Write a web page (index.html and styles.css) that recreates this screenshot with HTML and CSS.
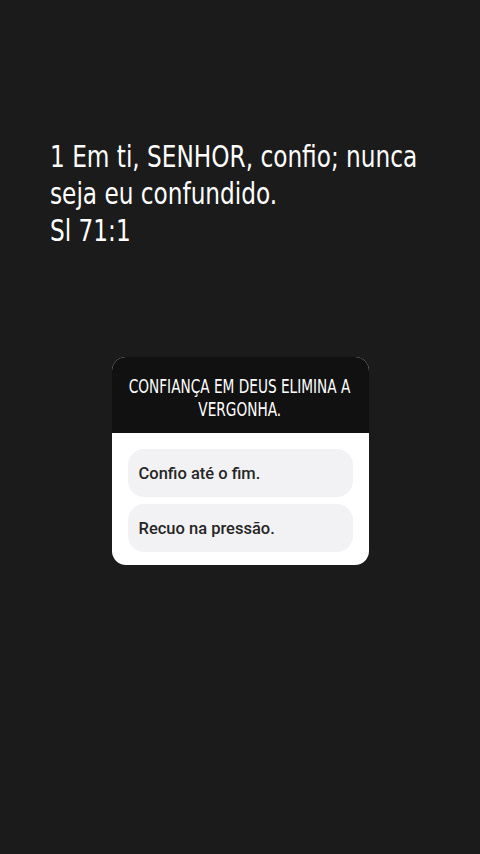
FILE: index.html
```html
<!DOCTYPE html>
<html lang="pt">
<head>
<meta charset="utf-8">
<link rel="stylesheet" href="styles.css">
</head>
<body>
<main class="story">
  <p class="verse"><span class="line">1 Em ti, SENHOR, confio; nunca</span><span class="line">seja eu confundido.</span><span class="line">Sl 71:1</span></p>
  <section class="quiz">
    <div class="quiz-head"><span class="hline">CONFIANÇA EM DEUS ELIMINA A</span><span class="hline">VERGONHA.</span></div>
    <div class="quiz-body">
      <div class="option">Confio até o fim.</div>
      <div class="option">Recuo na pressão.</div>
    </div>
  </section>
</main>
</body>
</html>
```
FILE: styles.css
```css
html, body {
  margin: 0;
  padding: 0;
  background: #1b1b1b;
}
.story {
  width: 480px;
  height: 854px;
  display: flex;
  flex-direction: column;
  align-items: center;
}
.verse {
  align-self: stretch;
  margin: 138px 0 0 0;
  padding: 0 0 0 50px;
  color: #ffffff;
  font-family: "DejaVu Sans Condensed", "Liberation Sans Narrow", sans-serif;
  font-size: 30px;
  line-height: 37px;
}
.verse .line {
  display: block;
  white-space: nowrap;
  transform: scaleX(0.86);
  transform-origin: left center;
}
.quiz {
  margin-top: 108px;
  width: 257px;
  border-radius: 14px;
  overflow: hidden;
  background: #ffffff;
}
.quiz-head {
  background: #111111;
  color: #ffffff;
  font-family: "DejaVu Sans Condensed", "Liberation Sans Narrow", sans-serif;
  font-size: 19px;
  line-height: 23px;
  display: flex;
  flex-direction: column;
  align-items: center;
  padding: 18px 0 12px;
}
.quiz-head .hline {
  white-space: nowrap;
  transform: scaleX(0.80);
  transform-origin: center center;
}
.quiz-body {
  padding: 16px 16px 13px;
  display: flex;
  flex-direction: column;
  gap: 7px;
}
.option {
  height: 48px;
  border-radius: 16px;
  background: #f2f2f4;
  display: flex;
  align-items: center;
  padding-left: 11px;
  color: #262626;
  font-family: "Roboto", "Liberation Sans", sans-serif;
  font-weight: 500;
  font-size: 16.5px;
}
```
